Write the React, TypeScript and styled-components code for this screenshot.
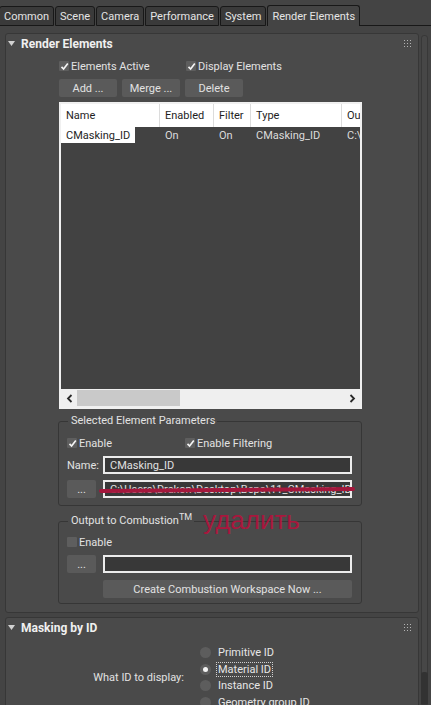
import styled, { createGlobalStyle } from 'styled-components';

const GlobalStyle = createGlobalStyle`
  html, body {
    margin: 0;
    padding: 0;
    background: #444444;
  }
  body {
    font-family: Roboto, "Liberation Sans", Arial, sans-serif;
    font-size: 11px;
    color: #dedede;
  }
  *, *::before, *::after {
    box-sizing: border-box;
  }
`;

const TABS = ['Common', 'Scene', 'Camera', 'Performance', 'System', 'Render Elements'];

const COLUMNS = [
  { label: 'Name', width: 99 },
  { label: 'Enabled', width: 54 },
  { label: 'Filter', width: 37 },
  { label: 'Type', width: 91 },
  { label: 'Ou', width: 60 },
];

const ROW = ['CMasking_ID', 'On', 'On', 'CMasking_ID', 'C:\\'];

const ID_MODES = ['Primitive ID', 'Material ID', 'Instance ID', 'Geometry group ID'];

const Window = styled.div`
  width: 431px;
  height: 705px;
  overflow: hidden;
  background: #444444;
  display: flex;
  flex-direction: column;
`;

const TabStrip = styled.div`
  height: 26px;
  flex-shrink: 0;
  display: flex;
  align-items: flex-end;
`;

const Tab = styled.div<{ $active?: boolean }>`
  height: ${({ $active }) => ($active ? '21px' : '20px')};
  padding: 0 4px;
  margin-right: 1px;
  display: flex;
  align-items: center;
  border: 1px solid #181818;
  border-bottom: ${({ $active }) => ($active ? 'none' : '1px solid #181818')};
  border-radius: 3px 3px 0 0;
  background: ${({ $active }) => ($active ? '#444444' : '#3a3a3a')};
  color: #e4e4e4;
  font-size: 11px;
  white-space: nowrap;

  &:first-child {
    margin-left: -1px;
  }
`;

const TabFiller = styled.div`
  flex: 1;
  align-self: stretch;
  border-bottom: 1px solid #181818;
  margin-left: -1px;
`;

const Main = styled.div`
  flex: 1;
  display: flex;
  min-height: 0;
`;

const Rollouts = styled.div`
  flex: 1;
  padding: 7px 2px 0 5px;
  display: flex;
  flex-direction: column;
  gap: 4px;
`;

const ScrollTrack = styled.div`
  width: 7px;
  margin: 9px 3px 0 0;
  border: 1px solid #383838;
  border-radius: 3px 3px 0 0;
  background: #474747;
  display: flex;
  flex-direction: column;
  justify-content: flex-end;
`;

const ScrollThumb = styled.div`
  height: 32px;
  margin: 0 -1px;
  border-radius: 3px 3px 0 0;
  background: #323232;
`;

const Panel = styled.section`
  flex-shrink: 0;
  border: 1px solid #373737;
  border-radius: 3px;
  background: #4a4a4a;
`;

const PanelHeader = styled.div`
  height: 19px;
  display: flex;
  align-items: center;
  padding: 0 7px 0 2px;
`;

const PanelTitle = styled.span`
  flex: 1;
  margin-left: 6px;
  font-size: 12px;
  font-weight: bold;
  color: #f0f0f0;
`;

const PanelBody = styled.div<{ $pad?: number }>`
  padding: 0 0 ${({ $pad }) => $pad ?? 8}px 53px;
`;

const Row = styled.div<{ $top?: number }>`
  display: flex;
  align-items: center;
  margin-top: ${({ $top }) => $top ?? 0}px;
`;

const CheckItem = styled.label<{ $w?: number }>`
  display: flex;
  align-items: center;
  gap: 2px;
  height: 14px;
  width: ${({ $w }) => ($w ? `${$w}px` : 'auto')};
  color: #e2e2e2;
  white-space: nowrap;
`;

const Box = styled.span`
  width: 10px;
  height: 10px;
  flex-shrink: 0;
  border-radius: 1px;
  background: #5e5e5e;
  display: flex;
  align-items: center;
  justify-content: center;
`;

const Button = styled.div<{ $w?: number }>`
  width: ${({ $w }) => ($w ? `${$w}px` : 'auto')};
  height: 18px;
  flex-shrink: 0;
  display: flex;
  align-items: center;
  justify-content: center;
  border-radius: 2px;
  background: #5a5a5a;
  color: #e2e2e2;
  white-space: nowrap;
`;

const ButtonRow = styled(Row)`
  gap: 5px;
`;

const ListFrame = styled.div`
  width: 303px;
  height: 307px;
  margin-top: 5px;
  border: 2px solid #f0f0f0;
  background: #424242;
  display: flex;
  flex-direction: column;
  overflow: hidden;
`;

const ListHeader = styled.div`
  height: 23px;
  flex-shrink: 0;
  display: flex;
  background: #ffffff;
`;

const HeaderCell = styled.div<{ $w: number }>`
  width: ${({ $w }) => $w}px;
  flex-shrink: 0;
  padding-left: 5px;
  display: flex;
  align-items: center;
  color: #1e1e1e;
  border-right: 1px solid #dcdcdc;
  white-space: nowrap;
  overflow: hidden;
`;

const ListRow = styled.div`
  height: 16px;
  flex-shrink: 0;
  display: flex;
`;

const Cell = styled.div<{ $w: number }>`
  width: ${({ $w }) => $w}px;
  flex-shrink: 0;
  padding-left: 5px;
  display: flex;
  align-items: center;
  white-space: nowrap;
  overflow: hidden;
  color: #dcdcdc;
`;

const SelectedText = styled.span`
  align-self: stretch;
  margin-left: -5px;
  padding: 0 5px;
  display: flex;
  align-items: center;
  background: #ffffff;
  color: #1e1e1e;
`;

const ListSpace = styled.div`
  flex: 1;
`;

const HScroll = styled.div`
  height: 18px;
  flex-shrink: 0;
  display: flex;
  align-items: stretch;
  background: #efefef;
  padding: 1px 0;
`;

const ScrollArrow = styled.div`
  width: 16px;
  display: flex;
  align-items: center;
  justify-content: center;
`;

const HThumb = styled.div`
  width: 103px;
  background: #c9c9c9;
`;

const Group = styled.fieldset<{ $top: number; $pad: number }>`
  position: relative;
  width: 304px;
  min-width: 0;
  margin: ${({ $top }) => $top}px 0 0 -1px;
  padding: 0 0 ${({ $pad }) => $pad}px 8px;
  border: 1px solid #363636;
  border-radius: 3px;
`;

const Legend = styled.legend`
  margin-left: 1px;
  padding: 0 2px 0 3px;
  height: 14px;
  line-height: 14px;
  color: #e2e2e2;
  white-space: nowrap;
`;

const Sup = styled.sup`
  font-size: 9px;
  vertical-align: 4px;
  line-height: 0;
`;

const FieldLabel = styled.span`
  width: 29px;
  flex-shrink: 0;
  color: #e2e2e2;
  white-space: nowrap;
`;

const Field = styled.div`
  width: 249px;
  height: 18px;
  margin-left: 7px;
  padding: 0 5px;
  display: flex;
  align-items: center;
  border: 2px solid #ececec;
  background: #383838;
  color: #e0e0e0;
  white-space: nowrap;
  overflow: hidden;
`;

const FieldRow = styled(Row)`
  position: relative;
`;

const Strike = styled.span`
  position: absolute;
  left: 32px;
  top: 8px;
  width: 256px;
  height: 4px;
  border-radius: 2px;
  background: #a4173c;
  transform: rotate(-0.5deg);
`;

const Note = styled.span`
  position: absolute;
  left: 144px;
  top: -23px;
  font-family: "Liberation Sans", Arial, sans-serif;
  font-size: 26px;
  color: #a8173d;
  white-space: nowrap;
`;

const Indent = styled.span`
  width: 36px;
  flex-shrink: 0;
`;

const RadioBlock = styled.div`
  display: flex;
  align-items: center;
  margin-top: 7px;
  padding-left: 85px;
`;

const RadioCaption = styled.span`
  width: 93px;
  text-align: right;
  color: #e2e2e2;
  white-space: nowrap;
`;

const RadioList = styled.div`
  margin-left: 16px;
  display: flex;
  flex-direction: column;
`;

const RadioItem = styled.div`
  height: 16.7px;
  display: flex;
  align-items: center;
  gap: 5px;
  white-space: nowrap;
  color: #e6e6e6;
`;

const Radio = styled.span<{ $on?: boolean }>`
  position: relative;
  width: 11px;
  height: 11px;
  flex-shrink: 0;
  border-radius: 50%;
  background: #5d5d5d;

  &::after {
    content: '';
    display: ${({ $on }) => ($on ? 'block' : 'none')};
    position: absolute;
    left: 3px;
    top: 3px;
    width: 5px;
    height: 5px;
    border-radius: 50%;
    background: #f4f4f4;
  }
`;

const RadioLabel = styled.span<{ $focus?: boolean }>`
  padding: 0 1px;
  border: 1px dotted ${({ $focus }) => ($focus ? '#d0d0d0' : 'transparent')};
  line-height: 13px;
`;

function Check({ on }: { on?: boolean }) {
  return (
    <Box>
      {on && (
        <svg width="9" height="9" viewBox="0 0 9 9">
          <path d="M1.5 4.8 L3.6 7 L7.8 1.6" fill="none" stroke="#f4f4f4" strokeWidth="1.7" />
        </svg>
      )}
    </Box>
  );
}

function Triangle() {
  return (
    <svg width="7" height="5" viewBox="0 0 7 5">
      <path d="M0 0 H7 L3.5 5 Z" fill="#d2d2d2" />
    </svg>
  );
}

function Grip() {
  return (
    <svg width="7" height="7" viewBox="0 0 7 7">
      {[0, 3, 6].map((y) =>
        [0, 3, 6].map((x) => <rect key={`${x}-${y}`} x={x} y={y} width="1" height="1" fill="#b4b4b4" />)
      )}
    </svg>
  );
}

function Chevron({ dir }: { dir: 'left' | 'right' }) {
  return (
    <svg width="7" height="9" viewBox="0 0 7 9">
      <path
        d={dir === 'left' ? 'M5.5 1 L2 4.5 L5.5 8' : 'M1.5 1 L5 4.5 L1.5 8'}
        fill="none"
        stroke="#2a2a2a"
        strokeWidth="1.8"
      />
    </svg>
  );
}

function ElementList() {
  return (
    <ListFrame>
      <ListHeader>
        {COLUMNS.map((c) => (
          <HeaderCell key={c.label} $w={c.width}>
            {c.label}
          </HeaderCell>
        ))}
      </ListHeader>
      <ListRow>
        {ROW.map((value, i) => (
          <Cell key={i} $w={COLUMNS[i].width}>
            {i === 0 ? <SelectedText>{value}</SelectedText> : value}
          </Cell>
        ))}
      </ListRow>
      <ListSpace />
      <HScroll>
        <ScrollArrow>
          <Chevron dir="left" />
        </ScrollArrow>
        <HThumb />
        <ListSpace />
        <ScrollArrow>
          <Chevron dir="right" />
        </ScrollArrow>
      </HScroll>
    </ListFrame>
  );
}

export default function App() {
  return (
    <>
      <GlobalStyle />
      <Window>
        <TabStrip>
          {TABS.map((t) => (
            <Tab key={t} $active={t === 'Render Elements'}>
              {t}
            </Tab>
          ))}
          <TabFiller />
        </TabStrip>
        <Main>
          <Rollouts>
            <Panel>
              <PanelHeader>
                <Triangle />
                <PanelTitle>Render Elements</PanelTitle>
                <Grip />
              </PanelHeader>
              <PanelBody>
                <Row $top={6}>
                  <CheckItem $w={127}>
                    <Check on />
                    Elements Active
                  </CheckItem>
                  <CheckItem>
                    <Check on />
                    Display Elements
                  </CheckItem>
                </Row>
                <ButtonRow $top={6}>
                  <Button $w={58}>Add ...</Button>
                  <Button $w={58}>Merge ...</Button>
                  <Button $w={58}>Delete</Button>
                </ButtonRow>
                <ElementList />

                <Group $top={5} $pad={7}>
                  <Legend>Selected Element Parameters</Legend>
                  <Row $top={8}>
                    <CheckItem $w={118}>
                      <Check on />
                      Enable
                    </CheckItem>
                    <CheckItem>
                      <Check on />
                      Enable Filtering
                    </CheckItem>
                  </Row>
                  <Row $top={6}>
                    <FieldLabel>Name:</FieldLabel>
                    <Field>CMasking_ID</Field>
                  </Row>
                  <FieldRow $top={6}>
                    <Button $w={29}>...</Button>
                    <Field>C:\Users\Drakon\Desktop\Вера\11_CMasking_ID</Field>
                    <Strike />
                  </FieldRow>
                </Group>

                <Group $top={8} $pad={5}>
                  <Legend>
                    Output to Combustion<Sup>TM</Sup>
                  </Legend>
                  <Note>удалить</Note>
                  <Row $top={7}>
                    <CheckItem>
                      <Check />
                      Enable
                    </CheckItem>
                  </Row>
                  <Row $top={6}>
                    <Button $w={29}>...</Button>
                    <Field />
                  </Row>
                  <Row $top={7}>
                    <Indent />
                    <Button $w={249}>Create Combustion Workspace Now ...</Button>
                  </Row>
                </Group>
              </PanelBody>
            </Panel>

            <Panel>
              <PanelHeader>
                <Triangle />
                <PanelTitle>Masking by ID</PanelTitle>
                <Grip />
              </PanelHeader>
              <RadioBlock>
                <RadioCaption>What ID to display:</RadioCaption>
                <RadioList>
                  {ID_MODES.map((m) => (
                    <RadioItem key={m}>
                      <Radio $on={m === 'Material ID'} />
                      <RadioLabel $focus={m === 'Material ID'}>{m}</RadioLabel>
                    </RadioItem>
                  ))}
                </RadioList>
              </RadioBlock>
            </Panel>
          </Rollouts>
          <ScrollTrack>
            <ScrollThumb />
          </ScrollTrack>
        </Main>
      </Window>
    </>
  );
}
